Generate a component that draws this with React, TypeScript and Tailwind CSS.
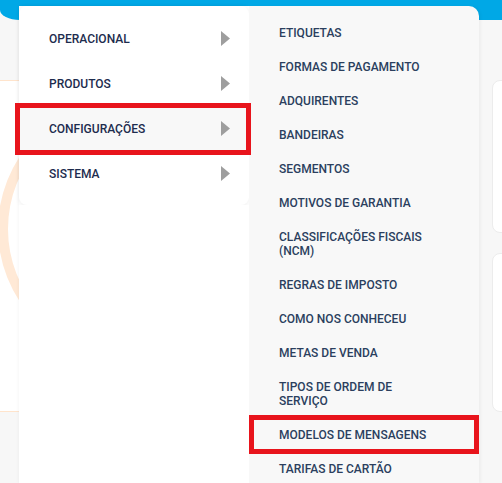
import React from 'react'

const mainItems = ['OPERACIONAL', 'PRODUTOS', 'CONFIGURAÇÕES', 'SISTEMA']

const subItems = [
  'ETIQUETAS',
  'FORMAS DE PAGAMENTO',
  'ADQUIRENTES',
  'BANDEIRAS',
  'SEGMENTOS',
  'MOTIVOS DE GARANTIA',
  'CLASSIFICAÇÕES FISCAIS (NCM)',
  'REGRAS DE IMPOSTO',
  'COMO NOS CONHECEU',
  'METAS DE VENDA',
  'TIPOS DE ORDEM DE SERVIÇO',
  'MODELOS DE MENSAGENS',
  'TARIFAS DE CARTÃO',
]

function Caret() {
  return (
    <svg width="9" height="15" viewBox="0 0 9 15" className="shrink-0">
      <polygon points="0,0 9,7.5 0,15" fill="#9e9e9e" />
    </svg>
  )
}

export default function App() {
  return (
    <div
      className="relative w-[502px] h-[483px] overflow-hidden bg-[#f7f7f7]"
      style={{ fontFamily: 'Roboto, "Liberation Sans", sans-serif' }}
    >
      {/* fundo da página */}
      <div className="h-[20px] bg-[#00a8e6] rounded-bl-[20px_10px]" />
      <div className="flex items-start pt-[60px]">
        <div className="relative w-[300px] h-[332px] shrink-0 overflow-hidden bg-white border-y border-[#ffe4cc]">
          <div className="absolute left-[-2px] top-[16px] w-[264px] h-[264px] rounded-full border-[10px] border-[#ffe9d6]" />
        </div>
        <div className="ml-auto w-[10px] flex flex-col gap-[20px]">
          <div className="w-[40px] h-[153px] shrink-0 bg-white border border-[#ececec] rounded-[8px]" />
          <div className="w-[40px] h-[159px] shrink-0 bg-white border border-[#ececec] rounded-[8px]" />
        </div>
      </div>

      {/* menu suspenso */}
      <div className="absolute left-[19px] top-[6px] flex h-[477px]">
        <div className="w-[230px] flex flex-col bg-white shadow-[0_0_4px_rgba(0,0,0,0.05)]">
          <div className="bg-white rounded-[8px] pt-[10px] pb-[9px] shadow-[0_1px_5px_rgba(0,0,0,0.07)]">
            {mainItems.map((item) => (
              <div
                key={item}
                className={`h-[45px] flex items-center justify-between pl-[30px] pr-[19px] ${
                  item === 'CONFIGURAÇÕES' ? 'bg-[#f8f8f8]' : ''
                }`}
              >
                <span className="text-[12px] font-medium text-[#1d2c4e] leading-[14px]">{item}</span>
                <Caret />
              </div>
            ))}
          </div>
          <div className="flex-1 bg-white" />
        </div>

        <div className="w-[230px] bg-[#f8f8f8] rounded-tr-[10px] pt-[10px] shadow-[2px_0_3px_rgba(0,0,0,0.04)]">
          {subItems.map((item) => (
            <div key={item} className="pl-[30px] pr-[46px] py-[10px]">
              <span className="block text-[12px] font-medium text-[#2b3f5e] leading-[14px]">{item}</span>
            </div>
          ))}
        </div>
      </div>

      {/* marcações */}
      <div className="absolute left-[15px] top-[103px] w-[236px] h-[52px] border-[5px] border-[#e8141c]" />
      <div className="absolute left-[249px] top-[415px] w-[230px] h-[39px] border-[5px] border-[#e8141c]" />
    </div>
  )
}
